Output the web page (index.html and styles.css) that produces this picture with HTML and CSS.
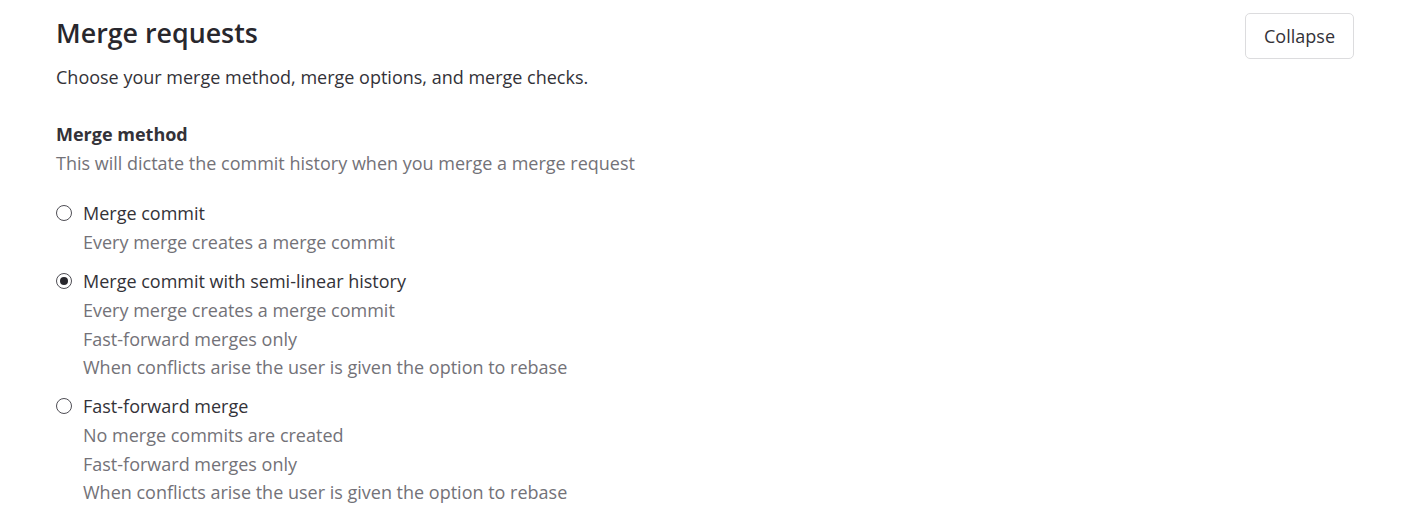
FILE: index.html
```html
<!DOCTYPE html>
<html lang="en">
<head>
<meta charset="utf-8">
<title>Merge requests</title>
<link rel="stylesheet" href="styles.css">
</head>
<body>
<section class="settings">
  <header class="settings-header">
    <div class="settings-intro">
      <h2 class="settings-title">Merge requests</h2>
      <p class="settings-desc">Choose your merge method, merge options, and merge checks.</p>
    </div>
    <button class="btn" type="button">Collapse</button>
  </header>
  <div class="settings-content">
    <fieldset class="group">
      <legend class="group-label">Merge method</legend>
      <p class="group-help">This will dictate the commit history when you merge a merge request</p>
      <div class="options">
        <label class="option">
          <input class="radio" type="radio" name="method">
          <span class="option-body">
            <span class="option-label">Merge commit</span>
            <span class="option-help">Every merge creates a merge commit</span>
          </span>
        </label>
        <label class="option">
          <input class="radio" type="radio" name="method" checked>
          <span class="option-body">
            <span class="option-label">Merge commit with semi-linear history</span>
            <span class="option-help">Every merge creates a merge commit</span>
            <span class="option-help">Fast-forward merges only</span>
            <span class="option-help">When conflicts arise the user is given the option to rebase</span>
          </span>
        </label>
        <label class="option">
          <input class="radio" type="radio" name="method">
          <span class="option-body">
            <span class="option-label">Fast-forward merge</span>
            <span class="option-help">No merge commits are created</span>
            <span class="option-help">Fast-forward merges only</span>
            <span class="option-help">When conflicts arise the user is given the option to rebase</span>
          </span>
        </label>
      </div>
    </fieldset>
  </div>
</section>
</body>
</html>
```

FILE: styles.css
```css
html, body {
  margin: 0;
  padding: 0;
  background: #ffffff;
}
body {
  font-family: "Open Sans", "Noto Sans", sans-serif;
  font-size: 18px;
  color: #333238;
}
.settings {
  padding: 13px 49px 0 56px;
}
.settings-header {
  display: flex;
  justify-content: space-between;
  align-items: flex-start;
}
.settings-title {
  margin: 0;
  font-size: 26.8px;
  line-height: 40px;
  font-weight: 600;
  color: #28272d;
}
.settings-desc {
  margin: 11px 0 0;
  line-height: 26px;
  font-size: 18px;
}
.btn {
  font-family: inherit;
  font-size: 18px;
  color: #333238;
  background: #fff;
  border: 1px solid #dcdcde;
  border-radius: 5px;
  height: 46px;
  padding: 0 18px;
  cursor: pointer;
}
.settings-content {
  margin-top: 30px;
}
.group {
  border: 0;
  margin: 0;
  padding: 0;
  min-width: 0;
}
.group-label {
  padding: 0;
  font-weight: 700;
  line-height: 28px;
  font-size: 18px;
}
.group-help {
  margin: 1px 0 0;
  color: #737278;
  line-height: 28px;
}
.options {
  display: flex;
  flex-direction: column;
  gap: 10.5px;
  margin-top: 22px;
}
.option {
  display: flex;
  align-items: flex-start;
  gap: 11px;
}
.radio {
  appearance: none;
  -webkit-appearance: none;
  width: 16px;
  height: 16px;
  margin: 6px 0 0 0;
  border: 1px solid #4f4e55;
  border-radius: 50%;
  background: #fff;
  flex: none;
  display: grid;
  place-content: center;
}
.radio:checked::before {
  content: "";
  width: 8px;
  height: 8px;
  border-radius: 50%;
  background: #28272d;
}
.option-body {
  display: flex;
  flex-direction: column;
}
.option-label {
  line-height: 29px;
}
.option-help {
  color: #737278;
  line-height: 28.5px;
}
```
